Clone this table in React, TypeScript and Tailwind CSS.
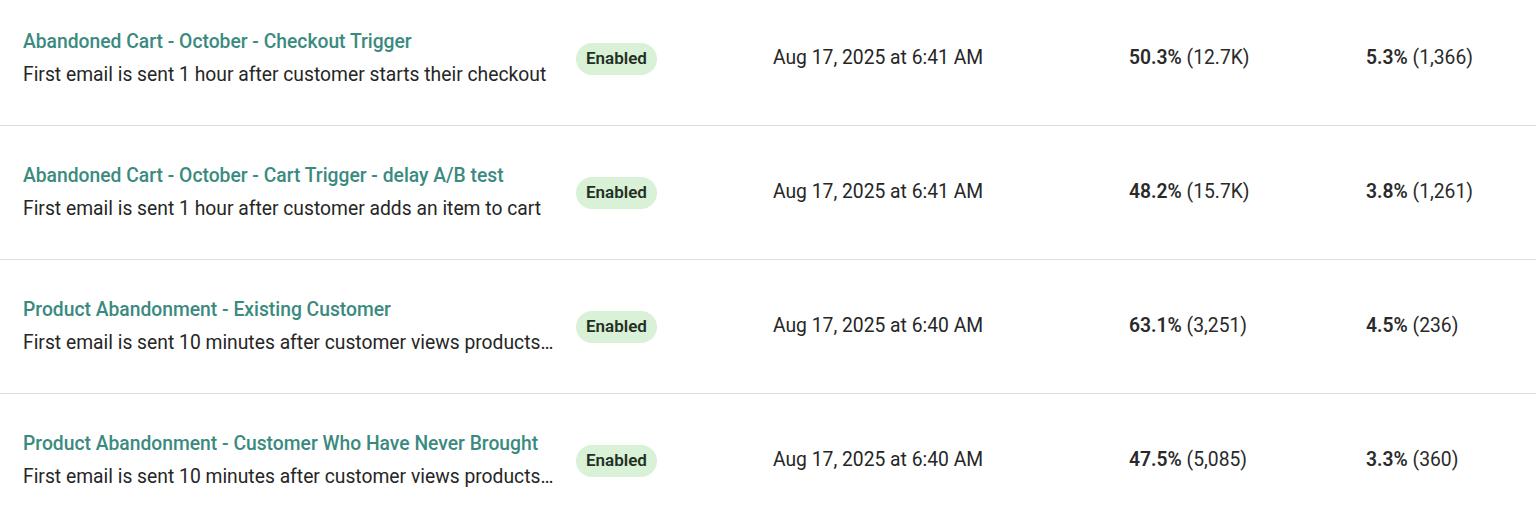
import React from "react";

type Row = {
  title: string;
  desc: string;
  date: string;
  open: string;
  openN: string;
  click: string;
  clickN: string;
};

const rows: Row[] = [
  {
    title: "Abandoned Cart - October - Checkout Trigger",
    desc: "First email is sent 1 hour after customer starts their checkout",
    date: "Aug 17, 2025 at 6:41 AM",
    open: "50.3%",
    openN: "(12.7K)",
    click: "5.3%",
    clickN: "(1,366)",
  },
  {
    title: "Abandoned Cart - October - Cart Trigger - delay A/B test",
    desc: "First email is sent 1 hour after customer adds an item to cart",
    date: "Aug 17, 2025 at 6:41 AM",
    open: "48.2%",
    openN: "(15.7K)",
    click: "3.8%",
    clickN: "(1,261)",
  },
  {
    title: "Product Abandonment - Existing Customer",
    desc: "First email is sent 10 minutes after customer views products and doesn't add to cart",
    date: "Aug 17, 2025 at 6:40 AM",
    open: "63.1%",
    openN: "(3,251)",
    click: "4.5%",
    clickN: "(236)",
  },
  {
    title: "Product Abandonment - Customer Who Have Never Brought",
    desc: "First email is sent 10 minutes after customer views products and doesn't add to cart",
    date: "Aug 17, 2025 at 6:40 AM",
    open: "47.5%",
    openN: "(5,085)",
    click: "3.3%",
    clickN: "(360)",
  },
];

export default function App() {
  return (
    <div
      className="w-[1536px] h-[521px] overflow-hidden bg-white text-[#222]"
      style={{ fontFamily: "Roboto, 'Noto Sans', sans-serif" }}
    >
      <div className="-mt-[8px]">
        {rows.map((r, i) => (
          <div
            key={i}
            className="grid grid-cols-[553px_197px_356px_237px_1fr] items-center h-[134px] pl-[23px] border-b border-[#dedede]"
          >
            <div className="flex flex-col gap-[9px] min-w-0 w-[532px]">
              <div className="text-[19.3px] leading-[24px] font-medium text-[#3b8a80] truncate">
                {r.title}
              </div>
              <div className="text-[19.3px] leading-[24px] text-[#262626] truncate">
                {r.desc}
              </div>
            </div>
            <div>
              <span className="inline-flex items-center justify-center h-[32px] w-[81px] rounded-full bg-[#d9f1d6] text-[17px] font-semibold text-[#223024]">
                Enabled
              </span>
            </div>
            <div className="text-[19.3px] text-[#262626]">{r.date}</div>
            <div className="text-[19.3px] text-[#2a2a2a]">
              <span className="font-semibold">{r.open}</span> {r.openN}
            </div>
            <div className="text-[19.3px] text-[#2a2a2a]">
              <span className="font-semibold">{r.click}</span> {r.clickN}
            </div>
          </div>
        ))}
      </div>
    </div>
  );
}
